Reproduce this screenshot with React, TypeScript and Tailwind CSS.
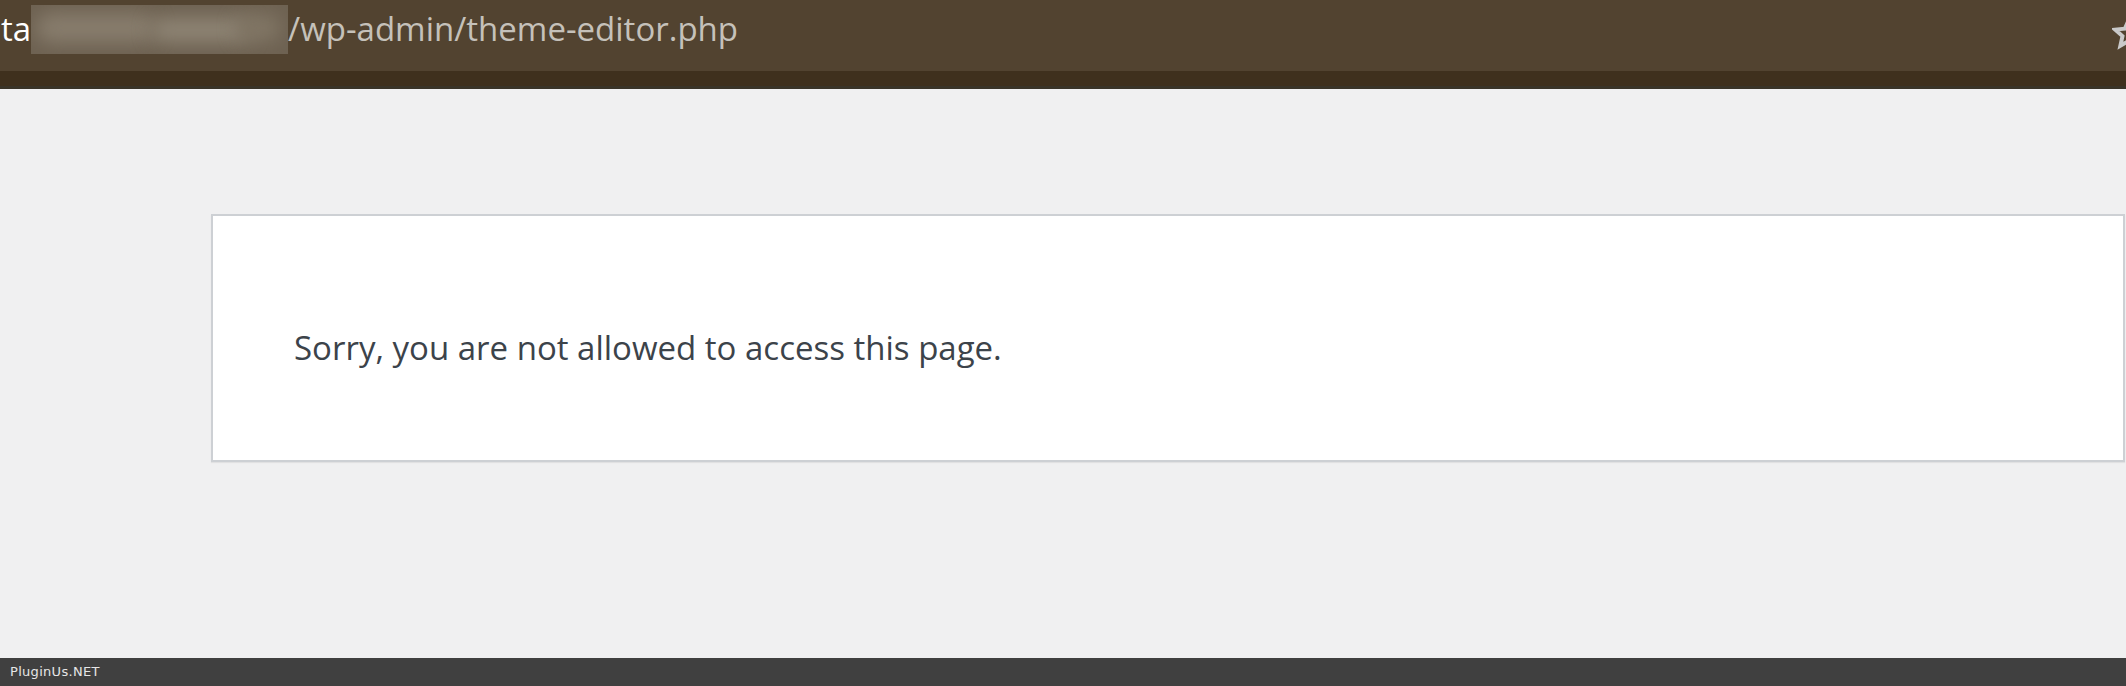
import React from 'react';

function StarOutline() {
  return (
    <svg width="34" height="34" viewBox="0 0 24 24" fill="none" stroke="#c9c9c9" strokeWidth="2.8" strokeLinejoin="miter">
      <polygon points="12,2.5 14.9,8.9 21.8,9.6 16.6,14.2 18.1,21 12,17.5 5.9,21 7.4,14.2 2.2,9.6 9.1,8.9" />
    </svg>
  );
}

export default function App() {
  return (
    <div className="w-[2126px] h-[686px] flex flex-col overflow-hidden bg-[#f0f0f1]">
      {/* browser address bar */}
      <div className="h-[71px] bg-[#524330] flex items-start relative overflow-hidden">
        <div className="flex items-center h-[56px] font-['Open_Sans',sans-serif] text-[33px] leading-none">
          <span className="text-white pl-[1px]">ta</span>
          <div className="relative w-[257px] h-[49px] mt-[2px] overflow-hidden bg-[#6e6252]">
            <div className="absolute left-[5px] top-[8px] w-[120px] h-[30px] rounded-full bg-[#877c6c] blur-[9px]" />
            <div className="absolute left-[120px] top-[12px] w-[100px] h-[26px] rounded-full bg-[#8d8373] blur-[9px]" />
            <div className="absolute left-[205px] top-[8px] w-[45px] h-[30px] rounded-full bg-[#807564] blur-[9px]" />
          </div>
          <span className="text-[#c5c1ba]">/wp-admin/theme-editor.php</span>
        </div>
        <div className="absolute right-[-20px] top-[16px]">
          <StarOutline />
        </div>
      </div>
      <div className="h-[15px] bg-[#3f301d]" />
      <div className="h-[3px] bg-[#3a3428]" />

      {/* wp_die body */}
      <div className="flex-1 pt-[125px] pl-[211px] pr-[1px]">
        <div className="h-[248px] bg-white border-2 border-[#cdd0d4] shadow-[0_1px_1px_rgba(0,0,0,0.06)] pt-[107px] pl-[81px]">
          <p className="font-['Open_Sans',sans-serif] text-[33px] text-[#3c434a]">
            Sorry, you are not allowed to access this page.
          </p>
        </div>
      </div>

      {/* footer strip */}
      <div className="h-[28px] bg-[#404040] flex items-center px-[10px]">
        <span className="font-['DejaVu_Sans',sans-serif] text-[13px] text-[#e6e6e6] tracking-[0.3px]">PluginUs.NET</span>
      </div>
    </div>
  );
}
